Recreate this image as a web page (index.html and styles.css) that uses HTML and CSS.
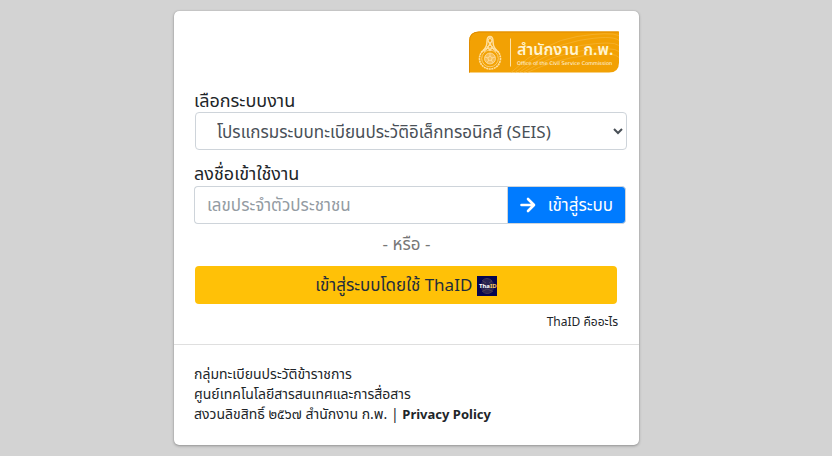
FILE: index.html
```html
<!DOCTYPE html>
<html lang="th">
<head>
<meta charset="utf-8">
<meta name="viewport" content="width=device-width, initial-scale=1">
<title>SEIS</title>
<link rel="stylesheet" href="styles.css">
</head>
<body>
<main class="card">
  <form class="card-body">
    <div class="brand">
      <svg class="logo" viewBox="0 0 150 41" role="img" aria-label="สำนักงาน ก.พ.">
        <path d="M10 0H150V31Q150 41 140 41H0V10Q0 0 10 0Z" fill="#f2a104"/>
        <path d="M.5 41V10Q.5 .5 10 .5H149.500" fill="none" stroke="#e08c00"/>
        <g fill="none" stroke="#f6b840" stroke-width=".6">
          <path d="M42 41Q75 10 108 5T150 4"/>
          <path d="M46 41Q77 15 110 9T150 9"/>
          <path d="M50 41Q80 19 112 14T150 14"/>
          <path d="M54 41Q83 23 114 19T150 20"/>
          <path d="M58 41Q86 28 116 24T150 26"/>
        </g>
        <g fill="none" stroke="#ffdf9f">
          <circle cx="21" cy="27" r="10.500" stroke-width="1.600" stroke-dasharray="2 .6"/>
          <circle cx="21" cy="27" r="8.300" stroke-width=".7"/>
          <circle cx="21" cy="27" r="5.500" fill="#f7bd54" stroke-width=".8"/>
          <circle cx="21" cy="27" r="2" stroke-width=".8"/>
          <path d="M21 21.500v3.500M26 25.500l-3.200 1M24.200 31.400l-2-2.800M17.800 31.400l2-2.800M16 25.500l3.200 1" stroke-width=".8"/>
          <path d="M12 21Q18 17 18 10Q18 5 21 5T24 10Q24 17 30 21" stroke-width="1.500"/>
          <path d="M15 20Q19 17 21 12Q23 17 27 20M19 9l2-3 2 3-2 4ZM18 15l3 4 3-4" stroke-width="1.300"/>
        </g>
        <path d="M41.500 7V35" stroke="#ffe3a6"/>
        <text class="logo-title" x="48" y="23">สำนักงาน ก.พ.</text>
        <text class="logo-sub" x="48" y="33">Office of the Civil Service Commission</text>
      </svg>
    </div>
    <label class="field-label" for="system">เลือกระบบงาน</label>
    <select class="system" id="system"><option>โปรแกรมระบบทะเบียนประวัติอิเล็กทรอนิกส์ (SEIS)</option></select>
    <label class="field-label login-label" for="citizen">ลงชื่อเข้าใช้งาน</label>
    <div class="login-row">
      <input class="citizen" id="citizen" type="text" placeholder="เลขประจำตัวประชาชน">
      <button class="login" type="submit">
        <svg class="arrow" viewBox="0 0 16 16" aria-hidden="true"><path d="M1.500 8H13.500M8 2l6 6-6 6" fill="none" stroke="#fff" stroke-width="2.600" stroke-linecap="round" stroke-linejoin="round"/></svg>
        <span>เข้าสู่ระบบ</span>
      </button>
    </div>
    <p class="or">- หรือ -</p>
    <button class="thaid" type="button">เข้าสู่ระบบโดยใช้ ThaID
      <svg class="thaid-icon" viewBox="0 0 20 20" aria-hidden="true">
        <path d="M0 0H20V20H0Z" fill="#05064f"/>
        <circle cx="10.500" cy="10" r="7" fill="#292451"/>
        <path d="M5 5Q10 0 15 5M5 15Q10 20 16 15M6 5l3 2M15 5l-3 2M6 15l4-2 5 2" fill="none" stroke="#574558" stroke-width=".8"/>
        <text class="thaid-word" x="2" y="12">Tha<tspan fill="#f5c65c">ID</tspan></text>
      </svg>
    </button>
    <div class="help"><a href="#thaid">ThaID คืออะไร</a></div>
  </form>
  <footer class="card-footer">
    <p>กลุ่มทะเบียนประวัติข้าราชการ</p>
    <p>ศูนย์เทคโนโลยีสารสนเทศและการสื่อสาร</p>
    <p>สงวนลิขสิทธิ์ ๒๕๖๗ สำนักงาน ก.พ. | <a class="privacy" href="#privacy">Privacy Policy</a></p>
  </footer>
</main>
</body>
</html>
```
FILE: styles.css
```css
* { box-sizing: border-box; }
body {
  margin: 0;
  padding: 0 19px 0 0;
  min-height: 100vh;
  display: flex;
  align-items: center;
  justify-content: center;
  background: #d3d3d3;
  color: #212529;
  font: 17px/24px "Noto Sans", "Noto Sans Thai", "Open Sans", sans-serif;
}
p { margin: 0; }
a { color: inherit; text-decoration: none; }
button, input, select { font: inherit; }
.card {
  width: 100%;
  max-width: 465px;
  background: #fff;
  border-radius: 5px;
  box-shadow: 0 0 1px rgba(0,0,0,.25), 0 1px 3px rgba(0,0,0,.3);
}
.card-body {
  display: flex;
  flex-direction: column;
  padding: 20px 20px 12px;
}
.brand { display: flex; justify-content: flex-end; margin-bottom: 15px; }
.logo { width: 150px; height: 42px; }
.logo-title { font-size: 16px; font-weight: 600; fill: #fff4d0; }
.logo-sub { font-family: "DejaVu Sans", sans-serif; font-size: 5px; fill: #fffbe8; }
.field-label { font-size: 18px; line-height: 24px; }
.system {
  height: 38px;
  margin: 0 -8px 0 1px;
  padding: 0 0 0 17px;
  border: 1px solid #ced4da;
  border-radius: 4px;
  background: #fff;
  color: #495057;
}
.login-label { margin: 11px 0 1px; }
.login-row { display: flex; height: 38px; margin-right: -7px; }
.citizen {
  flex: 1;
  min-width: 0;
  padding: 0 12px;
  border: 1px solid #ced4da;
  border-right: 0;
  border-radius: 4px 0 0 4px;
  color: #495057;
}
.citizen::placeholder { color: #939ba2; }
.login {
  display: flex;
  align-items: center;
  gap: 12px;
  padding: 0 12px;
  border: 1px solid #ced4da;
  border-radius: 0 4px 4px 0;
  background: #007bff;
  color: #fff;
  white-space: nowrap;
}
.arrow { width: 16px; height: 16px; }
.or { margin: 8px 0 10px; text-align: center; color: #777; }
.thaid {
  height: 38px;
  margin: 0 2px 0 1px;
  padding: 0 12px;
  border: 0;
  border-radius: 4px;
  background: #ffc107;
  color: #1f2d3d;
}
.thaid-icon { width: 20px; height: 20px; vertical-align: middle; }
.thaid-word { font-size: 6px; font-weight: 700; fill: #fff; }
.help { margin-top: 8px; padding-right: 1px; text-align: right; font-size: 12px; line-height: 20px; }
.card-footer {
  padding: 19px 20px 21px;
  border-top: 1px solid #dfdfdf;
  font-size: 14px;
  line-height: 20px;
}
.privacy { font-size: 13px; font-weight: 700; }
```
